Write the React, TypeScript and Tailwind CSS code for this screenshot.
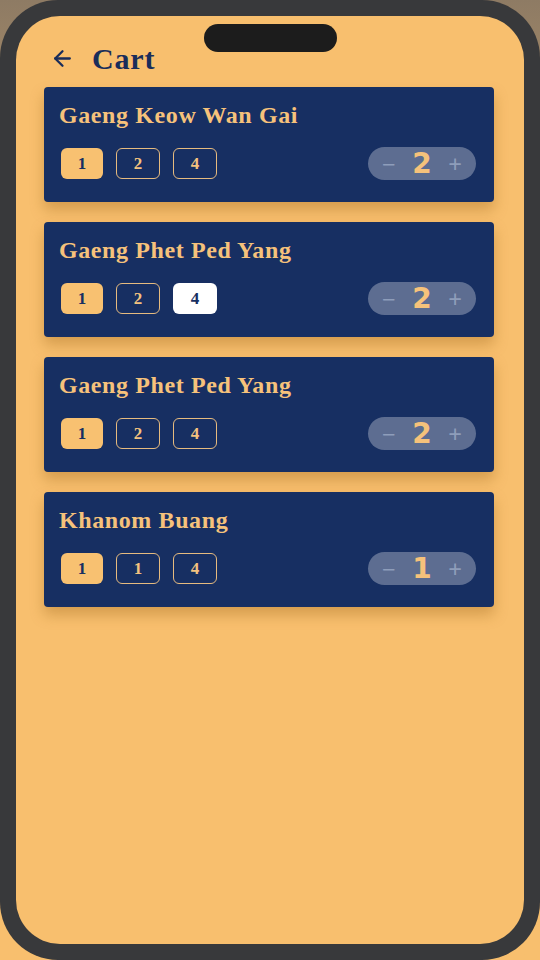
import { ArrowLeft } from "lucide-react";

type Item = {
  name: string;
  sizes: string[];
  selected: number;
  highlight?: number;
  qty: number;
};

const items: Item[] = [
  { name: "Gaeng Keow Wan Gai", sizes: ["1", "2", "4"], selected: 0, qty: 2 },
  { name: "Gaeng Phet Ped Yang", sizes: ["1", "2", "4"], selected: 0, highlight: 2, qty: 2 },
  { name: "Gaeng Phet Ped Yang", sizes: ["1", "2", "4"], selected: 0, qty: 2 },
  { name: "Khanom Buang", sizes: ["1", "1", "4"], selected: 0, qty: 1 },
];

const serif = { fontFamily: '"Liberation Serif", "DejaVu Serif", serif' };

function CartCard({ item }: { item: Item }) {
  return (
    <div className="w-[450px] h-[115px] bg-[#172f62] rounded-[4px] shadow-[0_8px_14px_rgba(150,95,20,0.35)] pl-[15px] pr-[18px] pt-[13px] flex flex-col">
      <h2 className="text-[24px] leading-[30px] font-bold text-[#f6c27b] tracking-[0.6px]">{item.name}</h2>
      <div className="mt-[17px] flex items-center justify-between">
        <div className="flex gap-[13px] pl-[2px]">
          {item.sizes.map((s, i) => {
            const isSel = i === item.selected;
            const isHi = i === item.highlight;
            return (
              <button
                key={i}
                className={
                  isSel
                    ? "w-[42px] h-[31px] rounded-[6px] bg-[#f8c171] text-[#172f62] text-[17px] font-bold"
                    : isHi
                    ? "w-[44px] h-[31px] rounded-[6px] bg-white text-[#172f62] text-[17px] font-bold"
                    : "w-[44px] h-[31px] rounded-[6px] border border-[#e6bb7f] text-[#f3c27f] text-[17px] font-bold"
                }
                style={serif}
              >
                {s}
              </button>
            );
          })}
        </div>
        <div className="w-[108px] h-[33px] rounded-full bg-white/30 flex items-center justify-between px-[14px]">
          <span className="text-[24px] leading-none text-[#8e9dba] font-sans">−</span>
          <span className="text-[28px] leading-none font-bold text-[#f6c27b]" style={{ fontFamily: '"DejaVu Sans", sans-serif' }}>
            {item.qty}
          </span>
          <span className="text-[24px] leading-none text-[#8e9dba] font-sans">+</span>
        </div>
      </div>
    </div>
  );
}

export default function App() {
  return (
    <div className="w-[540px] h-[960px] bg-gradient-to-b from-[#8e7b64] via-[#f8bf6e] to-[#f8bf6e]" style={serif}>
      <div className="relative w-full h-full rounded-[58px] bg-[#38393b] p-[16px]">
        <div className="w-full h-full rounded-[44px] bg-[#f8bf6e] overflow-hidden">
          <div className="flex items-center h-[80px] pl-[34px] pt-[4px]">
            <ArrowLeft className="w-[25px] h-[25px] text-[#1a2d5a]" strokeWidth={2.2} />
            <span className="ml-[17px] text-[30px] font-bold text-[#1a2d5a] tracking-[0.8px]">Cart</span>
          </div>
          <div className="flex flex-col gap-[20px] pl-[28px] -mt-[9px]">
            {items.map((it, i) => (
              <CartCard key={i} item={it} />
            ))}
          </div>
        </div>
        <div className="absolute top-[24px] left-[204px] w-[133px] h-[28px] rounded-full bg-[#1c1c1c]" />
      </div>
    </div>
  );
}
